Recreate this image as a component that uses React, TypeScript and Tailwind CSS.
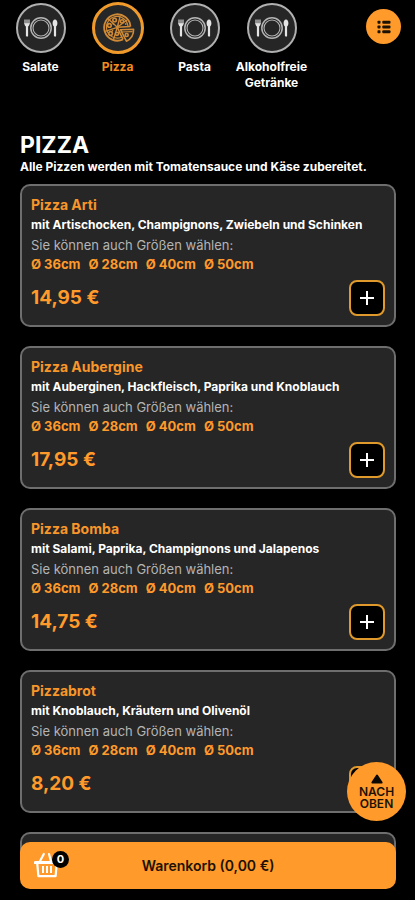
import React from 'react';

interface Category {
  name: string;
  icon: 'plate' | 'pizza';
  active?: boolean;
}

interface Dish {
  name: string;
  description: string;
  price: string;
}

const CATEGORIES: Category[] = [
  { name: 'Salate', icon: 'plate' },
  { name: 'Pizza', icon: 'pizza', active: true },
  { name: 'Pasta', icon: 'plate' },
  { name: 'Alkoholfreie Getränke', icon: 'plate' },
];

const SIZES = ['Ø 36cm', 'Ø 28cm', 'Ø 40cm', 'Ø 50cm'];

const DISHES: Dish[] = [
  { name: 'Pizza Arti', description: 'mit Artischocken, Champignons, Zwiebeln und Schinken', price: '14,95 €' },
  { name: 'Pizza Aubergine', description: 'mit Auberginen, Hackfleisch, Paprika und Knoblauch', price: '17,95 €' },
  { name: 'Pizza Bomba', description: 'mit Salami, Paprika, Champignons und Jalapenos', price: '14,75 €' },
  { name: 'Pizzabrot', description: 'mit Knoblauch, Kräutern und Olivenöl', price: '8,20 €' },
];

const PlateIcon = () => (
  <svg viewBox="0 0 36 24" className="w-9 h-6 flex-shrink-0" fill="none" stroke="#b4b4b4" aria-hidden="true">
    <circle cx="18" cy="12" r="10.2" strokeWidth="1.5" />
    <circle cx="18" cy="12" r="8" strokeWidth="1.1" />
    {/* fork */}
    <path d="M2 3.6v4.5M4 3.6v4.5M6 3.6v4.5" stroke="#e5e5e5" strokeWidth="1.1" />
    <path d="M1.4 7.2h5.2c0 1.8-.7 2.7-1.5 3.2v9.4c0 1.2-2.2 1.2-2.2 0v-9.4c-.8-.5-1.5-1.4-1.5-3.2z" fill="#e5e5e5" stroke="none" />
    {/* spoon */}
    <path d="M32 3.4c1.6 0 2.4 1.8 2.4 3.8 0 1.6-.6 2.7-1.3 3.2v9.4c0 1.2-2.2 1.2-2.2 0v-9.4c-.7-.5-1.3-1.6-1.3-3.2 0-2 .8-3.8 2.4-3.8z" fill="#e5e5e5" stroke="none" />
  </svg>
);

const PizzaIcon = () => (
  <svg viewBox="0 0 34 30" className="w-[34px] h-[30px] flex-shrink-0" fill="none" stroke="#d08a35" strokeWidth="1.6" strokeLinejoin="round" aria-hidden="true">
    <path d="M29.5 13.5A13.2 13.2 0 1 0 22 26.4" strokeWidth="1.8" />
    <path d="M27 13.4A10.8 10.8 0 1 0 20.5 24.2" strokeWidth="1.2" />
    <path d="M29.5 13.5 16.3 14.3 22 26.4" />
    <path d="M16.3 14.3 7.2 5.7M16.3 14.3 19 4M16.3 14.3 4.2 18.4M16.3 14.3 12.5 26.6M16.3 14.3 26 7" strokeWidth="1.4" />
    <path d="M19.5 16.7 32.6 16.2a13 13 0 0 1-7.2 12z" />
    <path d="M20.7 19 31.6 18.6" strokeWidth="1.2" />
    <circle cx="13.6" cy="7" r="1.8" />
    <circle cx="8.4" cy="12.4" r="1.8" />
    <circle cx="21" cy="8.4" r="1.6" />
    <circle cx="9.6" cy="20.4" r="1.8" />
    <circle cx="16" cy="20.8" r="1.6" />
    <circle cx="25.7" cy="22" r="1.5" />
    <path d="M11.5 10.3l1.5 1M24 11.3l1.5-.6M12 17.2l-1 1" />
  </svg>
);

const MenuIcon = () => (
  <svg viewBox="0 0 14 14" className="w-3.5 h-3.5" fill="#1c1204" aria-hidden="true">
    <rect x="0.5" y="0.8" width="3" height="3" rx="0.7" />
    <rect x="0.5" y="5.5" width="3" height="3" rx="0.7" />
    <rect x="0.5" y="10.2" width="3" height="3" rx="0.7" />
    <rect x="5.3" y="0.8" width="8.2" height="3" rx="1" />
    <rect x="5.3" y="5.5" width="8.2" height="3" rx="1" />
    <rect x="5.3" y="10.2" width="8.2" height="3" rx="1" />
  </svg>
);

const BasketIcon = () => (
  <svg viewBox="0 0 26 26" className="w-[26px] h-[26px]" fill="none" stroke="#fff" strokeWidth="2.2" aria-hidden="true">
    <path d="M5.8 9.5 9.8 2M17 9.5 15 2" strokeLinecap="round" />
    <path d="M1.2 10.6h23.6" strokeWidth="3" strokeLinecap="round" />
    <path d="M3.2 11 4.4 24.2h17.2L22.8 11" strokeLinejoin="round" />
    <path d="M9 14v7M13 14v7M17 14v7" strokeWidth="2" />
  </svg>
);

const CategoryLink = ({ category }: { category: Category }) => (
  <a href={`#${category.name}`} className="w-[77px] flex-shrink-0 flex flex-col items-center">
    <span
      className={
        category.active
          ? 'w-[52px] h-[52px] -my-px rounded-full border-3 border-[#f09a2c] bg-[#242628] flex items-center justify-center'
          : 'w-[50px] h-[50px] rounded-full border-2 border-[#b0b0b0] bg-[#262626] flex items-center justify-center'
      }
    >
      {category.icon === 'pizza' ? <PizzaIcon /> : <PlateIcon />}
    </span>
    <span
      className={
        category.active
          ? 'mt-1.5 text-xs leading-4 font-bold text-center text-[#f28c1e]'
          : 'mt-1.5 text-xs leading-4 font-bold text-center text-white'
      }
    >
      {category.name}
    </span>
  </a>
);

const DishCard = ({ dish }: { dish: Dish }) => (
  <article className="rounded-[10px] border-2 border-[#6e6e6e] bg-[#262626] p-[9px]">
    <h2 className="text-sm leading-5 font-bold text-[#f8962a]">{dish.name}</h2>
    <p className="text-xs leading-5 font-bold text-white">{dish.description}</p>
    <p className="text-[13px] leading-5 text-[#b4b4b4]">Sie können auch Größen wählen:</p>
    <ul className="flex gap-2 text-[13px] leading-[18px] font-bold text-[#ff9a2b]">
      {SIZES.map(size => (
        <li key={size}>{size}</li>
      ))}
    </ul>
    <div className="mt-[7px] flex items-center justify-between">
      <span className="text-[19px] font-bold text-[#ff9a2b]">{dish.price}</span>
      <button
        aria-label={`${dish.name} hinzufügen`}
        className="w-9 h-9 rounded-lg border-2 border-[#e09a2c] bg-black flex items-center justify-center"
      >
        <svg viewBox="0 0 14 14" className="w-3.5 h-3.5" stroke="#fff" strokeWidth="2" aria-hidden="true">
          <path d="M7 0v14M0 7h14" />
        </svg>
      </button>
    </div>
  </article>
);

export default function App() {
  return (
    <div className="h-screen overflow-hidden bg-black font-['Inter',sans-serif]">
      <header className="flex items-start justify-between h-[100px] pt-[3px] pl-0.5 pr-3.5">
        <nav className="flex">
          {CATEGORIES.map(category => (
            <CategoryLink key={category.name} category={category} />
          ))}
        </nav>
        <button
          aria-label="Menü"
          className="mt-1.5 w-[35px] h-[35px] rounded-full bg-[#ff9a2b] flex items-center justify-center"
        >
          <MenuIcon />
        </button>
      </header>

      <main className="pl-5 pr-[19px] pt-[31px]">
        <h1 className="text-[23px] leading-7 font-bold text-white">PIZZA</h1>
        <p className="text-xs leading-4 font-bold text-white">
          Alle Pizzen werden mit Tomatensauce und Käse zubereitet.
        </p>
        <div className="mt-[9px] flex flex-col gap-[19px]">
          {DISHES.map(dish => (
            <DishCard key={dish.name} dish={dish} />
          ))}
          <div className="h-9 rounded-[10px] border-2 border-[#6e6e6e] bg-[#262626]" />
        </div>
      </main>

      <button className="fixed right-[9px] bottom-[79px] w-[59px] h-[59px] rounded-full bg-[#ff9a2b] flex flex-col items-center justify-center text-xs leading-3 font-semibold text-[#1c1204]">
        <svg viewBox="0 0 12 10" className="w-3 h-2.5 mb-0.5" fill="#0c0803" stroke="#0c0803" strokeWidth="2" strokeLinejoin="round" aria-hidden="true">
          <path d="M6 1.6 10.6 8.6H1.4z" />
        </svg>
        <span>NACH</span>
        <span>OBEN</span>
      </button>

      <footer className="fixed inset-x-0 bottom-0 pl-5 pr-[19px] pb-[11px] bg-linear-to-b from-transparent from-50% to-black to-50%">
        <button className="relative w-full h-[47px] rounded-[10px] bg-[#ff9a2b] text-sm font-semibold text-[#1c1204]">
          <span className="absolute left-3.5 top-2.5">
            <BasketIcon />
            <span className="absolute left-[18px] -top-px w-[17px] h-[17px] rounded-full bg-black flex items-center justify-center text-[11px] font-bold text-white">
              0
            </span>
          </span>
          Warenkorb (0,00 €)
        </button>
      </footer>
    </div>
  );
}
